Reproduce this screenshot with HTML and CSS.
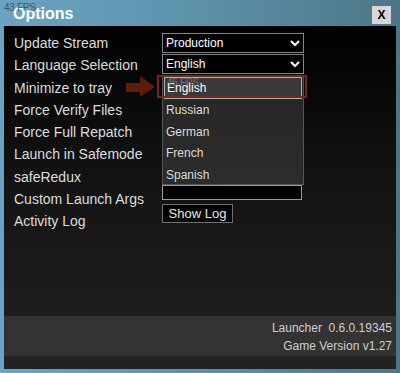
FILE: index.html
```html
<!DOCTYPE html>
<html lang="en">

<head>
    <meta charset="UTF-8">
    <meta name="viewport" content="width=device-width, initial-scale=1.0">
    <title>Options</title>
    <link rel="stylesheet" href="styles.css">
</head>

<body>
    <div class="window">
        <div class="titlebar">
            <span class="fps">43 FPS</span>
            <h1 class="title">Options</h1>
            <button class="close">X</button>
        </div>

        <div class="panel">
            <div class="main">
                <div class="settings">
                    <label class="row-label">Update Stream</label>
                    <div class="select first">
                        <span>Production</span>
                        <svg class="chevron" width="10" height="7" viewBox="0 0 10 7"><polyline points="1,1 5,5 9,1" /></svg>
                    </div>

                    <label class="row-label">Language Selection</label>
                    <div class="select">
                        <span>English</span>
                        <svg class="chevron" width="10" height="7" viewBox="0 0 10 7"><polyline points="1,1 5,5 9,1" /></svg>
                    </div>

                    <label class="row-label">Minimize to tray</label>
                    <div></div>

                    <label class="row-label">Force Verify Files</label>
                    <div></div>

                    <label class="row-label">Force Full Repatch</label>
                    <div></div>

                    <label class="row-label">Launch in Safemode</label>
                    <div></div>

                    <label class="row-label">safeRedux</label>
                    <div></div>

                    <label class="row-label">Custom Launch Args</label>
                    <div class="args"></div>

                    <label class="row-label">Activity Log</label>
                    <div class="cell"><button class="show-log">Show Log</button></div>
                </div>

                <!-- open language dropdown -->
                <ul class="dropdown">
                    <li class="item active">English<span class="fps ghost">45 FPS</span></li>
                    <li class="item">Russian</li>
                    <li class="item">German</li>
                    <li class="item">French</li>
                    <li class="item">Spanish</li>
                </ul>
                <div class="highlight"></div>
                <svg class="arrow" width="30" height="22" viewBox="0 0 30 22">
                    <polygon points="0,7 14,7 14,0 29,11 14,21 14,16 0,16" />
                </svg>
            </div>

            <div class="footer">
                <div>Launcher&nbsp;&nbsp;0.6.0.19345</div>
                <div>Game Version v1.27</div>
            </div>
            <div class="bottom"></div>
        </div>
    </div>
</body>

</html>
```

FILE: styles.css
```css
body {
    margin: 0;
    padding: 0;
    font-family: "Liberation Sans", Arial, sans-serif;
    background-color: #000;
}

.window {
    width: 400px;
    height: 373px;
    display: flex;
    flex-direction: column;
    background: linear-gradient(to right, #6ba4c2, #5d91aa 50%, #4c7686);
    box-sizing: border-box;
    padding: 0 4px 4px 4px;
}

.titlebar {
    position: relative;
    height: 26px;
    display: flex;
    align-items: center;
    justify-content: space-between;
    padding: 0 0 0 9px;
}

.title {
    margin: 0;
    padding-top: 1px;
    font-size: 16px;
    font-weight: bold;
    color: #fff;
}

.fps {
    position: absolute;
    left: 0;
    top: 2px;
    font-size: 10px;
    letter-spacing: -0.3px;
    color: #2f3a40;
    opacity: 0.75;
}

.close {
    width: 19px;
    height: 18px;
    margin-top: 3px;
    margin-right: 5px;
    padding: 0;
    border: none;
    background-color: #d6d6d6;
    color: #000;
    font-family: "Liberation Sans", Arial, sans-serif;
    font-size: 12px;
    font-weight: bold;
}

.panel {
    flex: 1;
    display: flex;
    flex-direction: column;
}

.main {
    position: relative;
    flex: 1;
    background: linear-gradient(to bottom, #000 0%, #111 45%, #1e1e1e 100%);
}

.settings {
    display: grid;
    grid-template-columns: 148px 142px;
    grid-auto-rows: 22.3px;
    padding: 6px 0 0 10px;
}

.row-label {
    color: #ddd;
    font-size: 14px;
    line-height: 22px;
    white-space: nowrap;
}

.select {
    display: flex;
    align-items: center;
    justify-content: space-between;
    height: 20px;
    box-sizing: border-box;
    border: 1px solid #858585;
    background-color: #000;
    color: #fff;
    font-size: 12px;
    padding: 0 3px 0 3px;
}

.select.first {
    margin-top: 1px;
}

.chevron {
    fill: none;
    stroke: #fff;
    stroke-width: 2.2;
}

.args {
    height: 15px;
    width: 140px;
    box-sizing: border-box;
    border: 1px solid #9a9a9a;
    background-color: #000;
    margin-top: -3px;
}

.cell {
    display: flex;
    align-items: flex-start;
}

.show-log {
    margin-top: -6px;
    height: 19px;
    width: 71px;
    padding: 0;
    border: 1px solid #707070;
    background-color: #000;
    color: #e8e8e8;
    font-family: "Liberation Sans", Arial, sans-serif;
    font-size: 13px;
}

.dropdown {
    position: absolute;
    left: 158px;
    top: 49px;
    width: 142px;
    height: 110px;
    box-sizing: border-box;
    margin: 0;
    padding: 0;
    list-style: none;
    border: 1px solid #555;
    background: linear-gradient(to bottom, #262626, #2c2c2c);
}

.item {
    position: relative;
    height: 21.7px;
    line-height: 22px;
    padding-left: 3px;
    color: #ddd;
    font-size: 12px;
}

.item.active {
    height: 20px;
    line-height: 20px;
    margin: 1px 1px 0 1px;
    padding-left: 2px;
    border: 1px solid #b0b0b0;
    background-color: #3a3a3a;
    color: #fff;
}

.fps.ghost {
    left: 2px;
    top: 0;
    line-height: 9px;
    color: #999;
    opacity: 0.6;
}

.highlight {
    position: absolute;
    left: 153px;
    top: 49px;
    width: 146px;
    height: 19px;
    border: 2px solid #7a2812;
}

.arrow {
    position: absolute;
    left: 122px;
    top: 50px;
    fill: #5c1e0b;
}

.footer {
    height: 40px;
    background-color: #333;
    color: #cfcfcf;
    font-size: 12px;
    text-align: right;
    padding: 3px 4px 0 0;
    box-sizing: border-box;
    line-height: 18px;
}

.bottom {
    height: 13px;
    background-color: #222;
}
```
